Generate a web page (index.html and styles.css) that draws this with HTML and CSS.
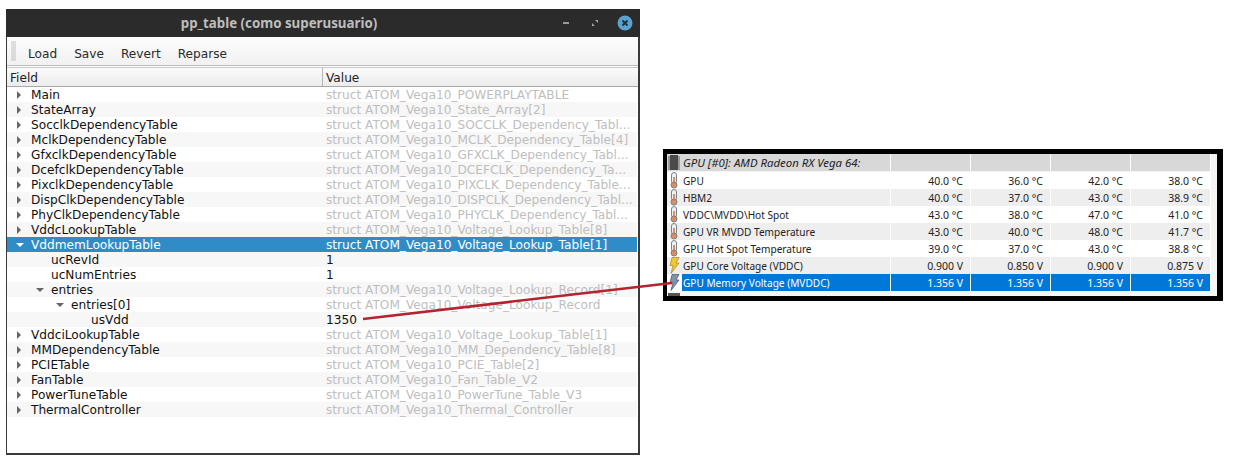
FILE: index.html
```html
<!DOCTYPE html>
<html lang="es">
<head>
<meta charset="utf-8">
<title>pp_table</title>
<link rel="stylesheet" href="styles.css">
</head>
<body>
<div class="stage">
  <section class="window">
    <header class="titlebar">
      <h1 class="title">pp_table (como superusuario)</h1>
      <div class="controls">
        <svg class="ctl" width="12" height="12" viewBox="0 0 12 12"><rect x="2" y="5" width="6" height="2" fill="#9a9a9a"/></svg>
        <svg class="ctl ctl-max" width="12" height="12" viewBox="0 0 12 12"><path d="M6 3h3v3zM3 6l3 3H3z" fill="#a5a5a5"/></svg>
        <svg class="ctl-close" width="16" height="16" viewBox="0 0 16 16"><circle cx="8" cy="8" r="7.500" fill="#5aa3cd"/><path d="M5.500 5.500l5 5M10.500 5.500l-5 5" stroke="#1f3442" stroke-width="2"/></svg>
      </div>
    </header>
    <nav class="toolbar">
      <span class="grip"></span>
      <span class="tool">Load</span><span class="tool">Save</span><span class="tool">Revert</span><span class="tool">Reparse</span>
    </nav>
    <div class="tree">
      <div class="thead"><div class="th th-field">Field</div><div class="th th-value">Value</div></div>
      <div class="row"><div class="f"><i class="arr"></i>Main</div><div class="v">struct ATOM_Vega10_POWERPLAYTABLE</div></div>
      <div class="row alt"><div class="f"><i class="arr"></i>StateArray</div><div class="v">struct ATOM_Vega10_State_Array[2]</div></div>
      <div class="row"><div class="f"><i class="arr"></i>SocclkDependencyTable</div><div class="v">struct ATOM_Vega10_SOCCLK_Dependency_Tabl...</div></div>
      <div class="row alt"><div class="f"><i class="arr"></i>MclkDependencyTable</div><div class="v">struct ATOM_Vega10_MCLK_Dependency_Table[4]</div></div>
      <div class="row"><div class="f"><i class="arr"></i>GfxclkDependencyTable</div><div class="v">struct ATOM_Vega10_GFXCLK_Dependency_Tabl...</div></div>
      <div class="row alt"><div class="f"><i class="arr"></i>DcefclkDependencyTable</div><div class="v">struct ATOM_Vega10_DCEFCLK_Dependency_Ta...</div></div>
      <div class="row"><div class="f"><i class="arr"></i>PixclkDependencyTable</div><div class="v">struct ATOM_Vega10_PIXCLK_Dependency_Table...</div></div>
      <div class="row alt"><div class="f"><i class="arr"></i>DispClkDependencyTable</div><div class="v">struct ATOM_Vega10_DISPCLK_Dependency_Tabl...</div></div>
      <div class="row"><div class="f"><i class="arr"></i>PhyClkDependencyTable</div><div class="v">struct ATOM_Vega10_PHYCLK_Dependency_Tabl...</div></div>
      <div class="row alt"><div class="f"><i class="arr"></i>VddcLookupTable</div><div class="v">struct ATOM_Vega10_Voltage_Lookup_Table[8]</div></div>
      <div class="row selected"><div class="f"><i class="arr open"></i>VddmemLookupTable</div><div class="v">struct ATOM_Vega10_Voltage_Lookup_Table[1]</div></div>
      <div class="row alt"><div class="f d1">ucRevId</div><div class="v num">1</div></div>
      <div class="row"><div class="f d1">ucNumEntries</div><div class="v num">1</div></div>
      <div class="row alt"><div class="f d1x"><i class="arr open"></i>entries</div><div class="v">struct ATOM_Vega10_Voltage_Lookup_Record[1]</div></div>
      <div class="row"><div class="f d2x"><i class="arr open"></i>entries[0]</div><div class="v">struct ATOM_Vega10_Voltage_Lookup_Record</div></div>
      <div class="row alt"><div class="f d3">usVdd</div><div class="v num">1350</div></div>
      <div class="row"><div class="f"><i class="arr"></i>VddciLookupTable</div><div class="v">struct ATOM_Vega10_Voltage_Lookup_Table[1]</div></div>
      <div class="row alt"><div class="f"><i class="arr"></i>MMDependencyTable</div><div class="v">struct ATOM_Vega10_MM_Dependency_Table[8]</div></div>
      <div class="row"><div class="f"><i class="arr"></i>PCIETable</div><div class="v">struct ATOM_Vega10_PCIE_Table[2]</div></div>
      <div class="row alt"><div class="f"><i class="arr"></i>FanTable</div><div class="v">struct ATOM_Vega10_Fan_Table_V2</div></div>
      <div class="row"><div class="f"><i class="arr"></i>PowerTuneTable</div><div class="v">struct ATOM_Vega10_PowerTune_Table_V3</div></div>
      <div class="row alt"><div class="f"><i class="arr"></i>ThermalController</div><div class="v">struct ATOM_Vega10_Thermal_Controller</div></div>
    </div>
  </section>

  <section class="sensors">
    <div class="s-table">
      <div class="s-row s-head">
        <div class="s-name"><svg class="s-ico" width="14" height="17" viewBox="0 0 14 17"><rect x="1" y="2" width="12" height="14" fill="#9a9a9a"/><rect x="3" y="1" width="8" height="15" fill="#4a4a4a"/></svg><em class="s-group">GPU [#0]: AMD Radeon RX Vega 64:</em></div>
        <div class="s-val"></div><div class="s-val"></div><div class="s-val"></div><div class="s-val"></div>
      </div>
      <div class="s-row">
        <div class="s-name"><svg class="s-ico" width="14" height="17" viewBox="0 0 14 17"><use href="#therm"/></svg>GPU</div>
        <div class="s-val">40.0 °C</div><div class="s-val">36.0 °C</div><div class="s-val">42.0 °C</div><div class="s-val">38.0 °C</div>
      </div>
      <div class="s-row s-alt">
        <div class="s-name"><svg class="s-ico" width="14" height="17" viewBox="0 0 14 17"><use href="#therm"/></svg>HBM2</div>
        <div class="s-val">40.0 °C</div><div class="s-val">37.0 °C</div><div class="s-val">43.0 °C</div><div class="s-val">38.9 °C</div>
      </div>
      <div class="s-row">
        <div class="s-name"><svg class="s-ico" width="14" height="17" viewBox="0 0 14 17"><use href="#therm"/></svg>VDDC\MVDD\Hot Spot</div>
        <div class="s-val">43.0 °C</div><div class="s-val">38.0 °C</div><div class="s-val">47.0 °C</div><div class="s-val">41.0 °C</div>
      </div>
      <div class="s-row s-alt">
        <div class="s-name"><svg class="s-ico" width="14" height="17" viewBox="0 0 14 17"><use href="#therm"/></svg>GPU VR MVDD Temperature</div>
        <div class="s-val">43.0 °C</div><div class="s-val">40.0 °C</div><div class="s-val">48.0 °C</div><div class="s-val">41.7 °C</div>
      </div>
      <div class="s-row">
        <div class="s-name"><svg class="s-ico" width="14" height="17" viewBox="0 0 14 17"><use href="#therm"/></svg>GPU Hot Spot Temperature</div>
        <div class="s-val">39.0 °C</div><div class="s-val">37.0 °C</div><div class="s-val">43.0 °C</div><div class="s-val">38.8 °C</div>
      </div>
      <div class="s-row s-alt">
        <div class="s-name"><svg class="s-ico" width="14" height="17" viewBox="0 0 14 17"><use href="#bolt"/></svg>GPU Core Voltage (VDDC)</div>
        <div class="s-val">0.900 V</div><div class="s-val">0.850 V</div><div class="s-val">0.900 V</div><div class="s-val">0.875 V</div>
      </div>
      <div class="s-row s-sel">
        <div class="s-name"><svg class="s-ico" width="14" height="17" viewBox="0 0 14 17"><use href="#bolt2"/></svg><span class="s-label">GPU Memory Voltage (MVDDC)</span></div>
        <div class="s-val">1.356 V</div><div class="s-val">1.356 V</div><div class="s-val">1.356 V</div><div class="s-val">1.356 V</div>
      </div>
      <div class="s-tail"><svg class="s-ico" width="14" height="5" viewBox="0 0 14 5"><rect x="1" y="2" width="12" height="3" fill="#555"/></svg></div>
    </div>
  </section>

  <svg class="arrow" width="1253" height="458" viewBox="0 0 1253 458">
    <path d="M363 319L672 283" stroke="#b5232f" stroke-width="2.500" fill="none"/>
  </svg>

  <svg class="defs" width="0" height="0">
    <defs>
      <g id="therm"><rect x="4.500" y="0.500" width="5" height="11" rx="2.500" fill="#eef0f4" stroke="#77838f"/><circle cx="7" cy="13" r="3" fill="#d98f5f" stroke="#77838f"/><rect x="6.200" y="5" width="1.600" height="7" fill="#cf7a48"/></g>
      <path id="bolt" d="M5 0.500h7L9 6h3l-8 10.500 2-8H3z" fill="#f3c62c" stroke="#a8862a" stroke-width=".7"/>
      <path id="bolt2" d="M5 0.500h7L9 6h3l-8 10.500 2-8H3z" fill="#7d95aa" stroke="#46525e" stroke-width=".7"/>
    </defs>
  </svg>
</div>
</body>
</html>
```
FILE: styles.css
```css
* { box-sizing: border-box; }
html, body { margin: 0; padding: 0; background: #fff; }
body { width: 1253px; height: 458px; overflow: hidden; font-family: "DejaVu Sans", sans-serif; }
.stage { position: relative; width: 1253px; height: 458px; display: flex; align-items: flex-start; padding: 9px 0 0 6px; }

.window { width: 634px; height: 446px; flex: none; display: flex; flex-direction: column; background: #fff; border: solid #3a3a3a; border-width: 0 2px 2px 1px; }
.titlebar { height: 28px; flex: none; background: #2b2b2b; display: flex; align-items: center; justify-content: center; position: relative; margin: 0 -2px 0 -1px; padding-right: 88px; }
.title { margin: 0; font-family: "Noto Sans", sans-serif; font-size: 13.300px; font-weight: 700; color: #bdbdbd; }
.controls { position: absolute; right: 7px; top: 6px; display: flex; align-items: center; gap: 16px; }
.ctl { display: block; }

.toolbar { height: 29px; flex: none; display: flex; align-items: center; background: linear-gradient(#fdfdfd, #f1f1f1); border-bottom: 1px solid #bbb; padding: 6px 0 0 4px; font-size: 12.150px; color: #2a2a2a; }
.grip { width: 5px; height: 20px; margin: -6px 12px 0 0; background-image: radial-gradient(#bdbdbd 0.6px, transparent 0.8px); background-size: 2px 2px; }
.tool { margin-right: 17px; }

.tree { flex: 1; font-size: 12.150px; border-top: 1px solid #c8c8c8; margin-top: 1px; }
.thead { display: flex; height: 19px; background: linear-gradient(#fbfbfb, #ececec); border-bottom: 1px solid #a8a8a8; color: #222; line-height: 20px; }
.th { padding-left: 3px; }
.th-field { width: 316px; border-right: 1px solid #b5b5b5; }
.th-value { flex: 1; }

.row { display: flex; height: 15px; line-height: 17px; white-space: nowrap; color: #111; margin-right: 1px; }
.row.alt { background: #f7f7f7; }
.f { width: 317px; padding-left: 24px; position: relative; }
.v { flex: 1; height: 15px; padding-left: 2px; color: #bebebe; overflow: hidden; }
.v.num { color: #111; }
.d1 { padding-left: 44px; }
.d1x { padding-left: 44px; }
.d2x { padding-left: 64px; }
.d3 { padding-left: 84px; }
.arr { position: absolute; left: 10px; top: 4px; width: 0; height: 0; border-style: solid; border-width: 4px 0 4px 4px; border-color: transparent transparent transparent #666; }
.arr.open { border-width: 4px 4px 0 4px; border-color: #666 transparent transparent transparent; left: 9px; top: 6px; }
.d1x .arr { left: 29px; }
.d2x .arr { left: 49px; }
.row.selected { background: #308cc6; color: #fff; }
.row.selected .v { color: #fff; }
.row.selected .arr { border-top-color: #fff; }

.sensors { margin: 140px 0 0 23px; width: 560px; height: 152px; flex: none; background: #000; padding: 5px 6px 5px 4px; }
.s-table { background: #f5f5f5; height: 142px; font-family: "Noto Sans", sans-serif; font-size: 10.500px; color: #222; overflow: hidden; }
.s-row { display: flex; height: 17px; line-height: 18px; background: #fff; margin-right: 6px; }
.s-alt { background: #eee; }
.s-head { background: #d8d8d8; height: 17px; margin-bottom: 1px; }
.s-name { width: 224px; display: flex; align-items: center; border-right: 1px solid #fff; white-space: nowrap; font-size: 10.100px; }
.s-group { font-size: 11.400px; }
.s-val { width: 80px; padding-right: 7px; text-align: right; border-right: 1px solid #fff; }
.s-ico { flex: none; margin-right: 2px; display: block; }
.s-sel { background: #0078d7; color: #fff; }
.s-sel .s-name { background: linear-gradient(90deg, #fff 15px, #0078d7 15px); }
.s-tail { height: 5px; }

.arrow { position: absolute; left: 0; top: 0; pointer-events: none; }
.defs { position: absolute; }
```
